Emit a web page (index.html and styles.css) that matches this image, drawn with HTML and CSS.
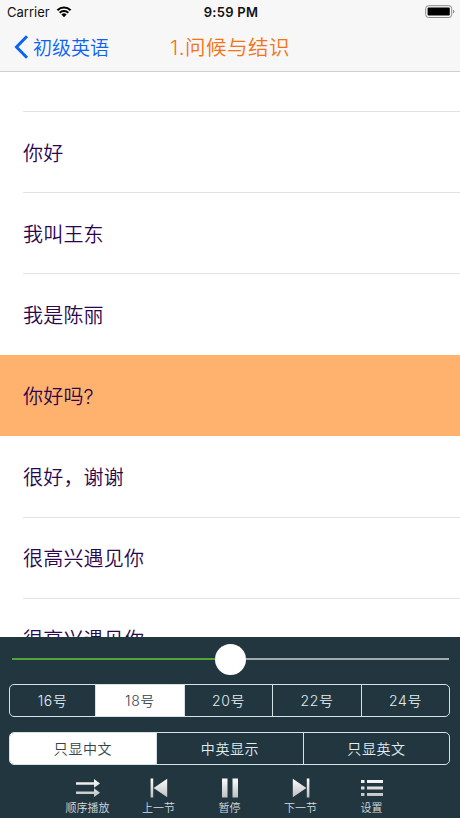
FILE: index.html
```html
<!DOCTYPE html>
<html lang="zh-CN">
<head>
    <meta charset="UTF-8">
    <meta name="viewport" content="width=device-width, initial-scale=1">
    <title>初级英语</title>
    <link rel="stylesheet" href="styles.css">
</head>
<body>
    <header class="header">
        <div class="status">
            <div class="carrier">
                <span>Carrier</span>
                <svg width="16" height="12" viewBox="0 0 16 12">
                    <path d="M1.4 4.2a9.5 9.5 0 0 1 13.2 0M3.7 6.8a6.1 6.1 0 0 1 8.6 0" fill="none" stroke="#000" stroke-width="2"/>
                    <path d="M8 11.2L5.4 8.6a3.7 3.7 0 0 1 5.2 0z"/>
                </svg>
            </div>
            <span class="time">9:59 PM</span>
            <svg class="battery" width="30" height="14" viewBox="0 0 30 14">
                <rect x=".7" y=".7" width="26" height="11.8" rx="2.8" fill="#f7f7f7" stroke="#8b8b8b"/>
                <rect x="2.6" y="2.6" width="22.2" height="8" rx="1"/>
                <path d="M28 4.7a2 2 0 0 1 0 3.8z" fill="#8b8b8b"/>
            </svg>
        </div>
        <nav class="nav">
            <a class="back">
                <svg width="15" height="24" viewBox="0 0 15 24">
                    <path d="M13 1.2L2.5 12 13 22.8" fill="none" stroke="#0b63f6" stroke-width="3"/>
                </svg>
                <span>初级英语</span>
            </a>
            <h1 class="title">1.问候与结识</h1>
        </nav>
    </header>

    <main class="list">
        <div class="row first"></div>
        <div class="row"><p>你好</p></div>
        <div class="row"><p>我叫王东</p></div>
        <div class="row plain"><p>我是陈丽</p></div>
        <div class="row active"><p>你好吗?</p></div>
        <div class="row"><p>很好，谢谢</p></div>
        <div class="row"><p>很高兴遇见你</p></div>
        <div class="row"><p>很高兴遇见你</p></div>
    </main>

    <footer class="panel">
        <div class="slider">
            <div class="played"></div>
            <div class="thumb"></div>
            <div class="rest"></div>
        </div>
        <div class="segment size">
            <button>16号</button>
            <button class="on">18号</button>
            <button>20号</button>
            <button>22号</button>
            <button>24号</button>
        </div>
        <div class="segment lang">
            <button class="on">只显中文</button>
            <button>中英显示</button>
            <button>只显英文</button>
        </div>
        <div class="tools">
            <div class="tool">
                <svg width="26" height="20" viewBox="0 0 26 20">
                    <defs>
                        <linearGradient id="silver" gradientUnits="userSpaceOnUse" x1="0" y1="0" x2="0" y2="20">
                            <stop offset="0" stop-color="#fff"/>
                            <stop offset="1" stop-color="#bdbdbd"/>
                        </linearGradient>
                    </defs>
                    <path fill="url(#silver)" d="M1 4.200h18V1l6 4.400-6 4.400V6.700H1zM1 13.500h18v-3.200l6 4.400-6 4.400V16H1z"/>
                </svg>
                <span>顺序播放</span>
            </div>
            <div class="tool">
                <svg width="18" height="20" viewBox="0 0 18 20">
                    <path fill="url(#silver)" d="M.6.500h2.600v19H.6zM17.200.700v18.500L3.600 10z"/>
                </svg>
                <span>上一节</span>
            </div>
            <div class="tool">
                <svg width="18" height="20" viewBox="0 0 18 20">
                    <path fill="url(#silver)" d="M1 .500h5.500v19H1zM11.500.500H17v19h-5.500z"/>
                </svg>
                <span>暂停</span>
            </div>
            <div class="tool">
                <svg width="18" height="20" viewBox="0 0 18 20">
                    <path fill="url(#silver)" d="M14.800.500h2.600v19h-2.600zM.8.700v18.500L14.400 10z"/>
                </svg>
                <span>下一节</span>
            </div>
            <div class="tool">
                <svg width="24" height="20" viewBox="0 0 24 20">
                    <path fill="url(#silver)" d="M1 2h3.500v3H1zM7 2h16v3H7zM1 8.500h3.500v3H1zM7 8.500h16v3H7zM1 15h3.500v3H1zM7 15h16v3H7z"/>
                </svg>
                <span>设置</span>
            </div>
        </div>
    </footer>
</body>
</html>
```

FILE: styles.css
```css
* {
    box-sizing: border-box;
}
body {
    margin: 0;
    height: 818px;
    display: flex;
    flex-direction: column;
    overflow: hidden;
    background-color: #fff;
    font-family: Inter, "Noto Sans CJK SC", sans-serif;
}
svg {
    display: block;
    flex: none;
}
.header {
    flex: none;
    height: 72px;
    background-color: #f7f7f7;
    border-bottom: 1px solid #cfcfcf;
}
.status {
    display: grid;
    grid-template-columns: 1fr auto 1fr;
    align-items: center;
    height: 24px;
    padding: 0 5px 0 7px;
    font-size: 13px;
    color: #111;
}
.carrier {
    display: flex;
    align-items: center;
    gap: 6px;
}
.carrier svg {
    margin-bottom: 1px;
}
.time {
    font-weight: 600;
    letter-spacing: 0.3px;
}
.battery {
    justify-self: end;
}
.nav {
    display: grid;
    grid-template-columns: 1fr auto 1fr;
    align-items: center;
    height: 45px;
}
.back {
    display: flex;
    align-items: center;
    gap: 4px;
    padding-left: 14px;
    font-size: 19px;
    font-weight: 350;
    color: #0b63f6;
}
.title {
    margin: -2px 0 0;
    font-size: 20.5px;
    font-weight: 350;
    letter-spacing: 0.5px;
    color: #f47314;
}
.list {
    flex: 1;
    min-height: 0;
    overflow: hidden;
}
.row {
    display: flex;
    height: 81px;
    padding-left: 23px;
    font-size: 20px;
    font-weight: 350;
    letter-spacing: 0.2px;
    color: #2b064f;
}
.row p {
    flex: 1;
    margin: 0;
    line-height: 84px;
    border-bottom: 1px solid #e2e2e4;
}
.row.first {
    height: 40px;
    padding: 0;
    margin-left: 23px;
    border-bottom: 1px solid #e2e2e4;
}
.row.plain p,
.row.active p {
    border-color: transparent;
}
.row.active {
    background-color: #ffb26d;
}
.row.active + .row {
    height: 82px;
}
.row.active + .row ~ .row p {
    line-height: 82px;
}
.panel {
    flex: none;
    height: 181px;
    padding: 0 10px 0 9px;
    background-color: #22363f;
}
.slider {
    display: flex;
    align-items: center;
    height: 44px;
    padding: 0 1px 0 3px;
}
.played,
.rest {
    flex: 1;
    height: 2px;
    background-color: #54a338;
}
.rest {
    background-color: #a5aaaa;
}
.thumb {
    width: 31px;
    height: 31px;
    border-radius: 50%;
    background-color: #fff;
}
.segment {
    display: grid;
    height: 33px;
    margin-top: 3px;
    border: 1px solid #d5e2e6;
    border-radius: 5px;
    overflow: hidden;
}
.size {
    grid-template-columns: 86px 89px 88px 89px 1fr;
}
.lang {
    grid-template-columns: 147px 147px 1fr;
    margin-top: 15px;
}
.segment button {
    padding: 0 0 2px;
    border: 0;
    border-right: 1px solid #d5e2e6;
    background: none;
    font-family: inherit;
    font-size: 14px;
    font-weight: 350;
    letter-spacing: 0.6px;
    color: #e1edf0;
}
.segment button:last-child {
    border-right: 0;
}
.segment .on {
    background-color: #fff;
    color: #31434b;
}
.tools {
    display: grid;
    grid-template-columns: repeat(5, 71px);
    justify-content: center;
    margin-top: 13px;
}
.tool {
    display: flex;
    flex-direction: column;
    align-items: center;
    font-size: 11px;
    font-weight: 350;
    line-height: 20px;
    color: #d5dcde;
}
```
